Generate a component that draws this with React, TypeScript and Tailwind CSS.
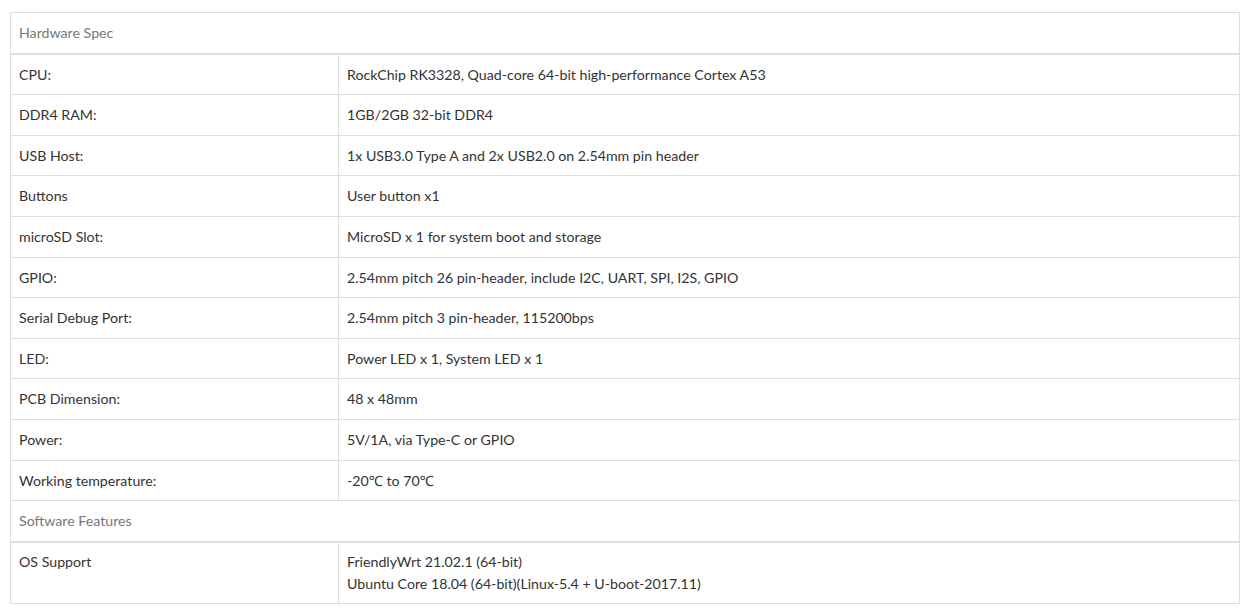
import React from "react";

const rows: [string, string][] = [
  ["CPU:", "RockChip RK3328, Quad-core 64-bit high-performance Cortex A53"],
  ["DDR4 RAM:", "1GB/2GB 32-bit DDR4"],
  ["USB Host:", "1x USB3.0 Type A and 2x USB2.0 on 2.54mm pin header"],
  ["Buttons", "User button x1"],
  ["microSD Slot:", "MicroSD x 1 for system boot and storage"],
  ["GPIO:", "2.54mm pitch 26 pin-header, include I2C, UART, SPI, I2S, GPIO"],
  ["Serial Debug Port:", "2.54mm pitch 3 pin-header, 115200bps"],
  ["LED:", "Power LED x 1, System LED x 1"],
  ["PCB Dimension:", "48 x 48mm"],
  ["Power:", "5V/1A, via Type-C or GPIO"],
  ["Working temperature:", "-20℃ to 70℃"],
];

export default function App() {
  return (
    <div className="bg-white w-[1253px] h-[616px] pt-[12px] pl-[10px]" style={{ fontFamily: "Lato, 'Noto Sans', sans-serif" }}>
      <table className="w-[1230px] border-collapse border border-[#dddddd] text-[14.2px] text-[#333333]">
        <tbody>
          <tr>
            <td colSpan={2} className="border-b-2 border-[#dddddd] px-2 py-2 leading-[23.6px] text-[#777777]">Hardware Spec</td>
          </tr>
          {rows.map(([k, v]) => (
            <tr key={k}>
              <td className="w-[328px] border border-[#dddddd] px-2 py-2 leading-[23.6px]">{k}</td>
              <td className="border border-[#dddddd] px-2 py-2 leading-[23.6px]">{v}</td>
            </tr>
          ))}
          <tr>
            <td colSpan={2} className="border-b-2 border-[#dddddd] px-2 py-2 leading-[23.6px] text-[#777777]">Software Features</td>
          </tr>
          <tr>
            <td className="w-[328px] border border-[#dddddd] px-2 py-2 leading-[22px] align-top">OS Support</td>
            <td className="border border-[#dddddd] px-2 py-2 leading-[22px]">
              <div>FriendlyWrt 21.02.1 (64-bit)</div>
              <div>Ubuntu Core 18.04 (64-bit)(Linux-5.4 + U-boot-2017.11)</div>
            </td>
          </tr>
        </tbody>
      </table>
    </div>
  );
}
